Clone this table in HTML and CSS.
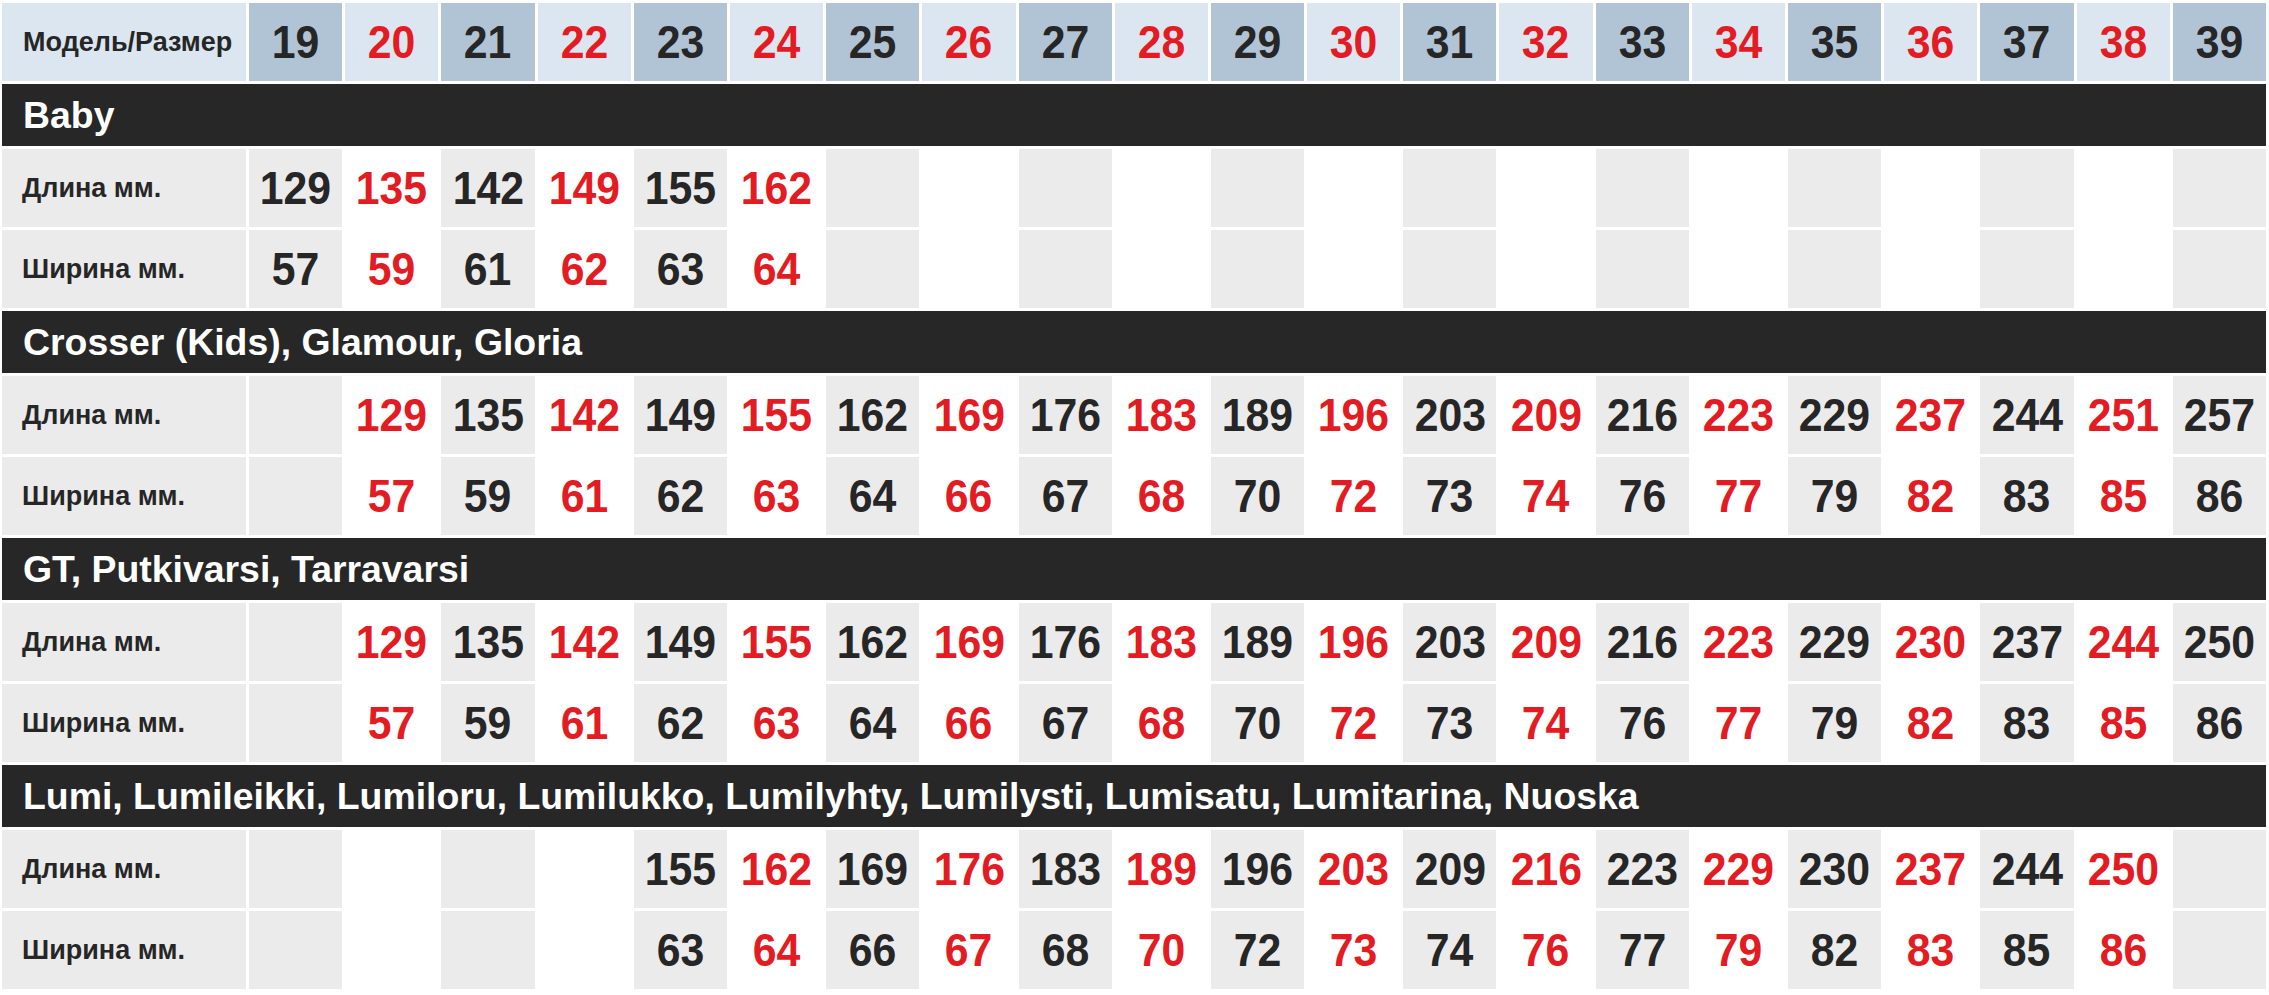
FILE: index.html
```html
<!DOCTYPE html>
<html lang="ru">
<head>
<meta charset="utf-8">
<title>Таблица размеров</title>
<link rel="stylesheet" href="styles.css">
</head>
<body>
<div class="table">
  <div class="head-label">Модель/Размер</div>
  <div class="h o"><span>19</span></div><div class="h e"><span>20</span></div><div class="h o"><span>21</span></div><div class="h e"><span>22</span></div><div class="h o"><span>23</span></div><div class="h e"><span>24</span></div><div class="h o"><span>25</span></div><div class="h e"><span>26</span></div><div class="h o"><span>27</span></div><div class="h e"><span>28</span></div><div class="h o"><span>29</span></div><div class="h e"><span>30</span></div><div class="h o"><span>31</span></div><div class="h e"><span>32</span></div><div class="h o"><span>33</span></div><div class="h e"><span>34</span></div><div class="h o"><span>35</span></div><div class="h e"><span>36</span></div><div class="h o"><span>37</span></div><div class="h e"><span>38</span></div><div class="h o"><span>39</span></div>

  <div class="bar">Baby</div>

  <div class="label">Длина мм.</div>
  <div class="c o"><span>129</span></div><div class="c e"><span>135</span></div><div class="c o"><span>142</span></div><div class="c e"><span>149</span></div><div class="c o"><span>155</span></div><div class="c e"><span>162</span></div><div class="c o"></div><div class="c e"></div><div class="c o"></div><div class="c e"></div><div class="c o"></div><div class="c e"></div><div class="c o"></div><div class="c e"></div><div class="c o"></div><div class="c e"></div><div class="c o"></div><div class="c e"></div><div class="c o"></div><div class="c e"></div><div class="c o"></div>
  <div class="label">Ширина мм.</div>
  <div class="c o"><span>57</span></div><div class="c e"><span>59</span></div><div class="c o"><span>61</span></div><div class="c e"><span>62</span></div><div class="c o"><span>63</span></div><div class="c e"><span>64</span></div><div class="c o"></div><div class="c e"></div><div class="c o"></div><div class="c e"></div><div class="c o"></div><div class="c e"></div><div class="c o"></div><div class="c e"></div><div class="c o"></div><div class="c e"></div><div class="c o"></div><div class="c e"></div><div class="c o"></div><div class="c e"></div><div class="c o"></div>

  <div class="bar">Crosser (Kids), Glamour, Gloria</div>

  <div class="label">Длина мм.</div>
  <div class="c o"></div><div class="c e"><span>129</span></div><div class="c o"><span>135</span></div><div class="c e"><span>142</span></div><div class="c o"><span>149</span></div><div class="c e"><span>155</span></div><div class="c o"><span>162</span></div><div class="c e"><span>169</span></div><div class="c o"><span>176</span></div><div class="c e"><span>183</span></div><div class="c o"><span>189</span></div><div class="c e"><span>196</span></div><div class="c o"><span>203</span></div><div class="c e"><span>209</span></div><div class="c o"><span>216</span></div><div class="c e"><span>223</span></div><div class="c o"><span>229</span></div><div class="c e"><span>237</span></div><div class="c o"><span>244</span></div><div class="c e"><span>251</span></div><div class="c o"><span>257</span></div>
  <div class="label">Ширина мм.</div>
  <div class="c o"></div><div class="c e"><span>57</span></div><div class="c o"><span>59</span></div><div class="c e"><span>61</span></div><div class="c o"><span>62</span></div><div class="c e"><span>63</span></div><div class="c o"><span>64</span></div><div class="c e"><span>66</span></div><div class="c o"><span>67</span></div><div class="c e"><span>68</span></div><div class="c o"><span>70</span></div><div class="c e"><span>72</span></div><div class="c o"><span>73</span></div><div class="c e"><span>74</span></div><div class="c o"><span>76</span></div><div class="c e"><span>77</span></div><div class="c o"><span>79</span></div><div class="c e"><span>82</span></div><div class="c o"><span>83</span></div><div class="c e"><span>85</span></div><div class="c o"><span>86</span></div>

  <div class="bar">GT, Putkivarsi, Tarravarsi</div>

  <div class="label">Длина мм.</div>
  <div class="c o"></div><div class="c e"><span>129</span></div><div class="c o"><span>135</span></div><div class="c e"><span>142</span></div><div class="c o"><span>149</span></div><div class="c e"><span>155</span></div><div class="c o"><span>162</span></div><div class="c e"><span>169</span></div><div class="c o"><span>176</span></div><div class="c e"><span>183</span></div><div class="c o"><span>189</span></div><div class="c e"><span>196</span></div><div class="c o"><span>203</span></div><div class="c e"><span>209</span></div><div class="c o"><span>216</span></div><div class="c e"><span>223</span></div><div class="c o"><span>229</span></div><div class="c e"><span>230</span></div><div class="c o"><span>237</span></div><div class="c e"><span>244</span></div><div class="c o"><span>250</span></div>
  <div class="label">Ширина мм.</div>
  <div class="c o"></div><div class="c e"><span>57</span></div><div class="c o"><span>59</span></div><div class="c e"><span>61</span></div><div class="c o"><span>62</span></div><div class="c e"><span>63</span></div><div class="c o"><span>64</span></div><div class="c e"><span>66</span></div><div class="c o"><span>67</span></div><div class="c e"><span>68</span></div><div class="c o"><span>70</span></div><div class="c e"><span>72</span></div><div class="c o"><span>73</span></div><div class="c e"><span>74</span></div><div class="c o"><span>76</span></div><div class="c e"><span>77</span></div><div class="c o"><span>79</span></div><div class="c e"><span>82</span></div><div class="c o"><span>83</span></div><div class="c e"><span>85</span></div><div class="c o"><span>86</span></div>

  <div class="bar">Lumi, Lumileikki, Lumiloru, Lumilukko, Lumilyhty, Lumilysti, Lumisatu, Lumitarina, Nuoska</div>

  <div class="label">Длина мм.</div>
  <div class="c o"></div><div class="c e"></div><div class="c o"></div><div class="c e"></div><div class="c o"><span>155</span></div><div class="c e"><span>162</span></div><div class="c o"><span>169</span></div><div class="c e"><span>176</span></div><div class="c o"><span>183</span></div><div class="c e"><span>189</span></div><div class="c o"><span>196</span></div><div class="c e"><span>203</span></div><div class="c o"><span>209</span></div><div class="c e"><span>216</span></div><div class="c o"><span>223</span></div><div class="c e"><span>229</span></div><div class="c o"><span>230</span></div><div class="c e"><span>237</span></div><div class="c o"><span>244</span></div><div class="c e"><span>250</span></div><div class="c o"></div>
  <div class="label">Ширина мм.</div>
  <div class="c o"></div><div class="c e"></div><div class="c o"></div><div class="c e"></div><div class="c o"><span>63</span></div><div class="c e"><span>64</span></div><div class="c o"><span>66</span></div><div class="c e"><span>67</span></div><div class="c o"><span>68</span></div><div class="c e"><span>70</span></div><div class="c o"><span>72</span></div><div class="c e"><span>73</span></div><div class="c o"><span>74</span></div><div class="c e"><span>76</span></div><div class="c o"><span>77</span></div><div class="c e"><span>79</span></div><div class="c o"><span>82</span></div><div class="c e"><span>83</span></div><div class="c o"><span>85</span></div><div class="c e"><span>86</span></div><div class="c o"></div>
</div>
</body>
</html>
```

FILE: styles.css
```css
html, body {
  margin: 0;
  padding: 0;
  background: #ffffff;
}

body {
  font-family: "Liberation Sans", Arial, sans-serif;
  font-weight: bold;
  color: #262626;
}

.table {
  display: grid;
  grid-template-columns: 244px repeat(21, 1fr);
  grid-template-rows: 78px 62px 78px 78px 62px 78px 78px 62px 78px 78px 62px 78px 78px;
  gap: 3px;
  width: 2264px;
  margin: 3px 0 0 2px;
}

.head-label {
  background: #dce6f1;
  display: flex;
  align-items: center;
  padding-left: 21px;
  font-size: 27px;
  color: #262626;
}

.label {
  background: #ebebeb;
  display: flex;
  align-items: center;
  padding-left: 20px;
  font-size: 27px;
  color: #262626;
}

.h, .c {
  display: flex;
  align-items: center;
  justify-content: center;
  font-size: 46px;
}

.h span, .c span {
  display: inline-block;
  transform: scaleX(0.93);
}

.h.o { background: #b0c4d6; color: #262626; }
.h.e { background: #dce6f1; color: #e31b23; }

.c.o { background: #ebebeb; color: #262626; }
.c.e { background: #ffffff; color: #e31b23; }

.bar {
  grid-column: 1 / -1;
  background: #272727;
  color: #ffffff;
  font-size: 37.4px;
  display: flex;
  align-items: center;
  padding-left: 21px;
}
```
